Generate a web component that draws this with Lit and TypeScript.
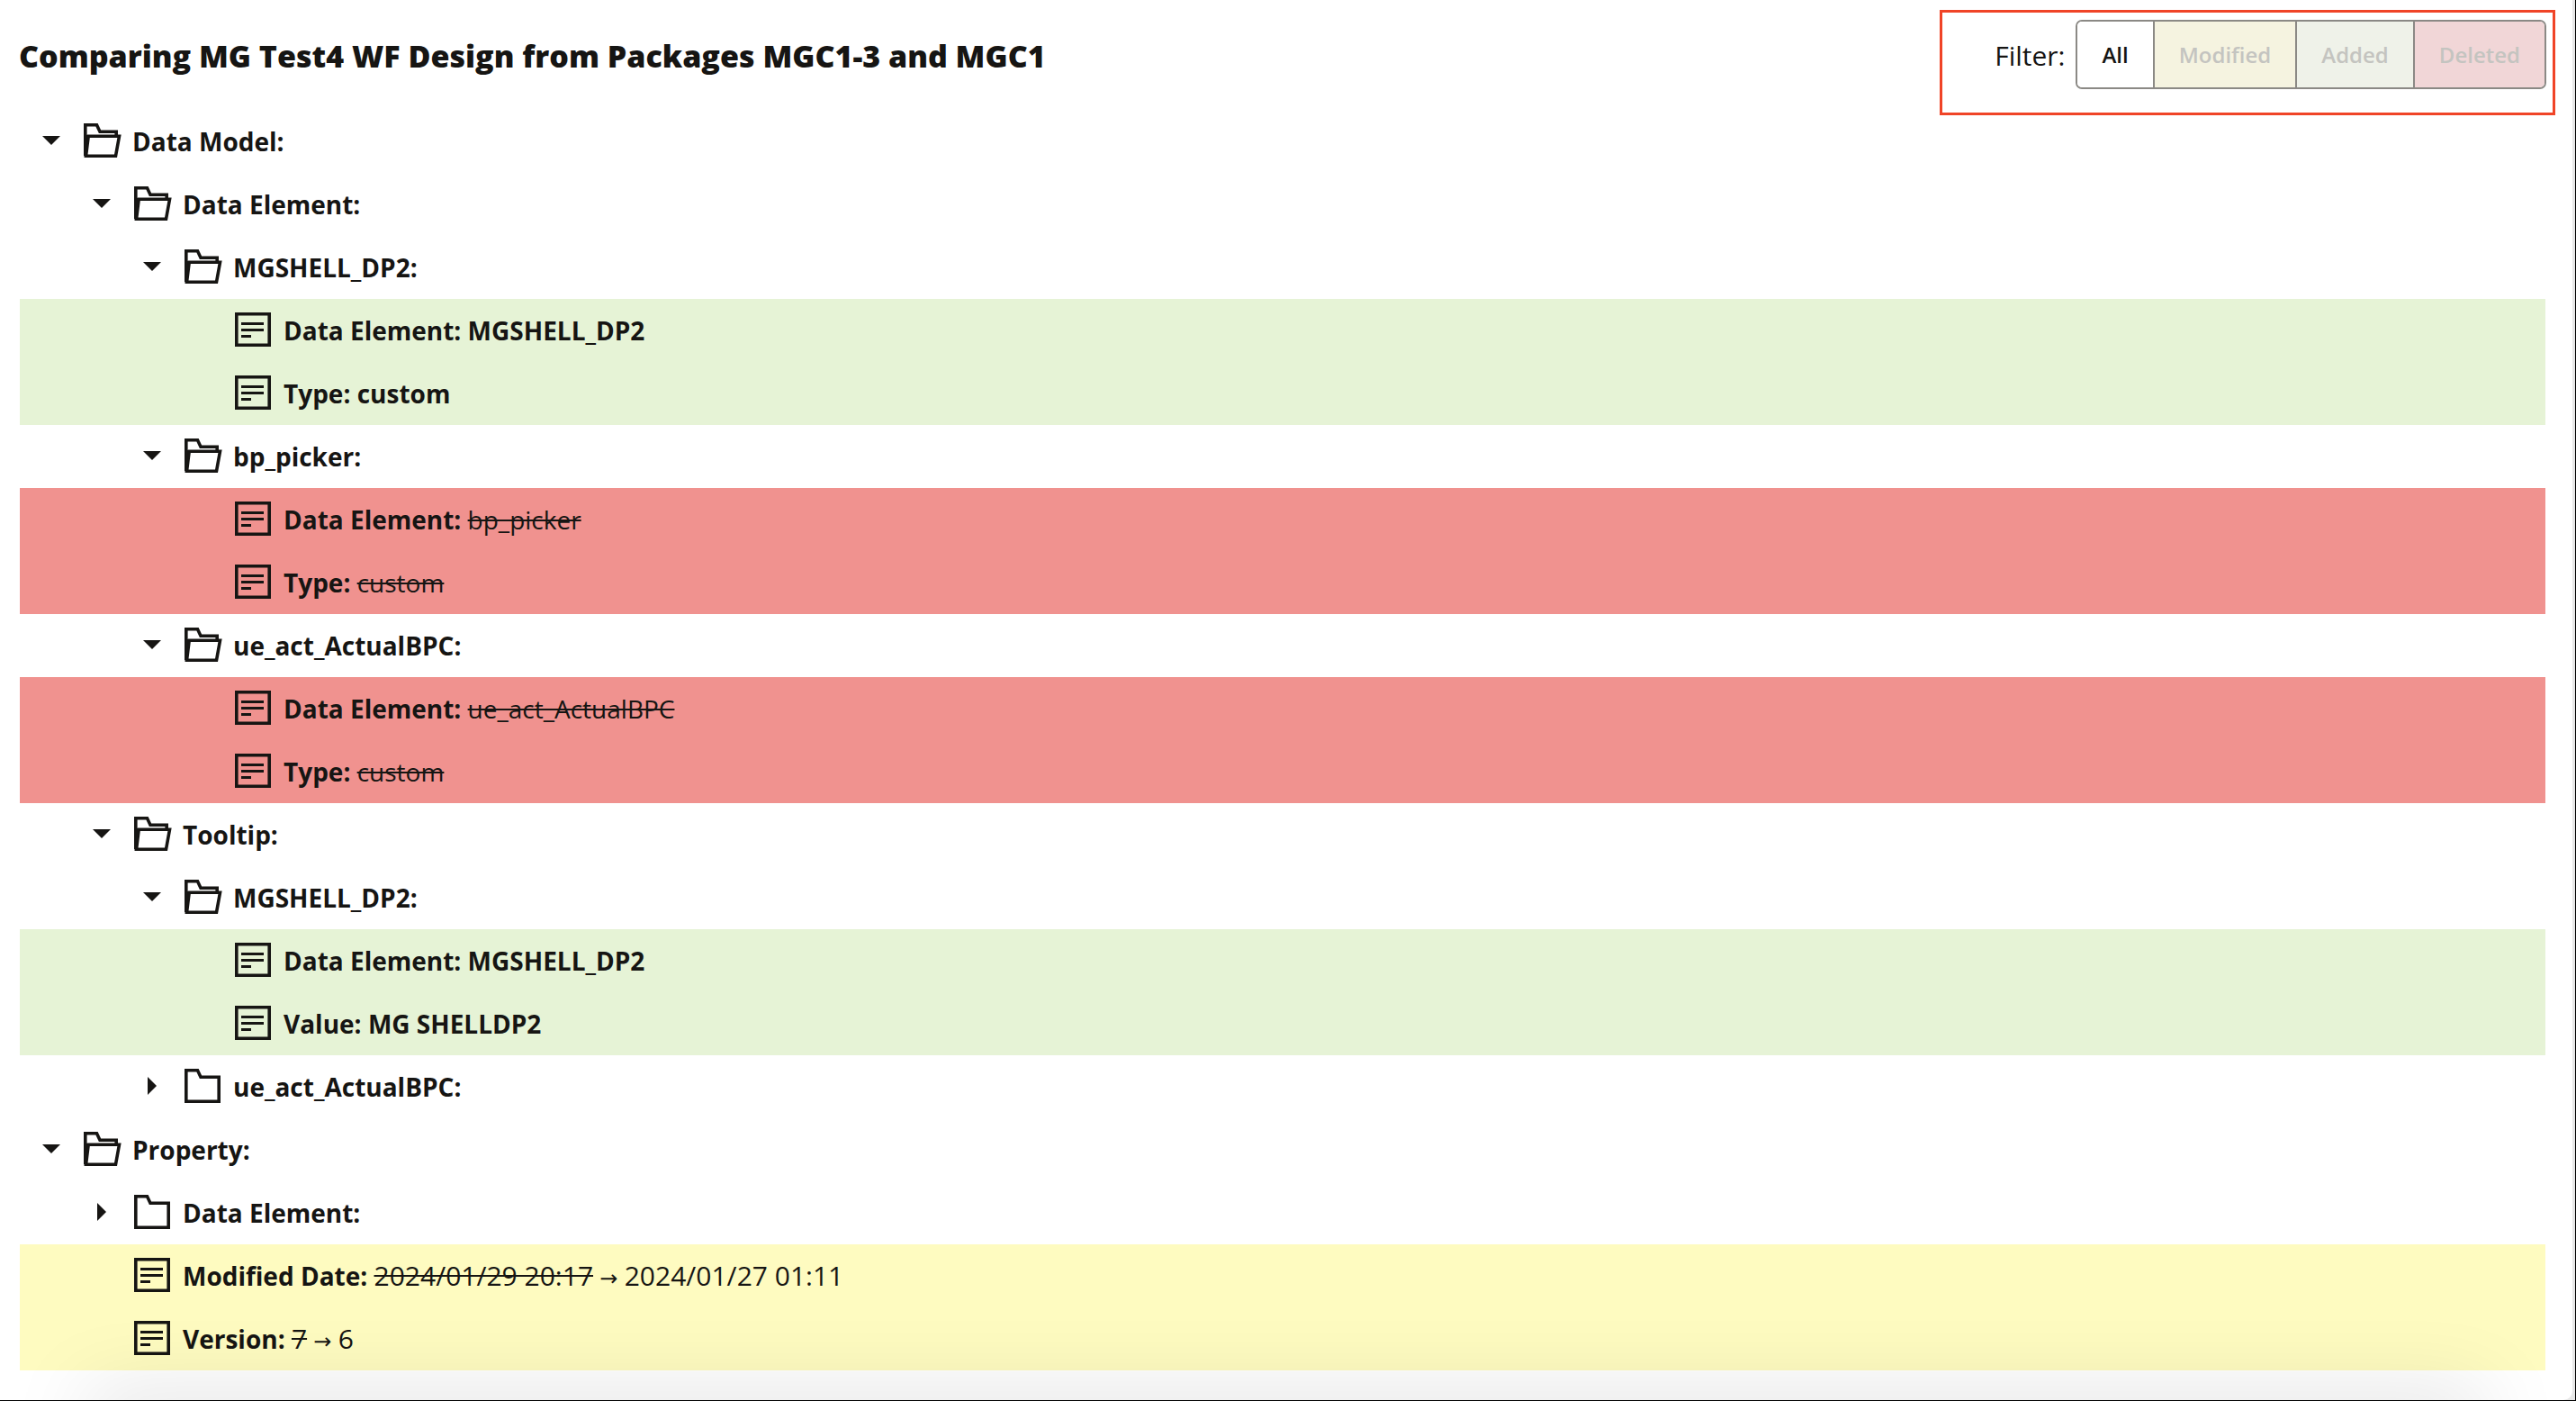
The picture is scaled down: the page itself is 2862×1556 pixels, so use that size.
import { LitElement, html, css, svg, nothing } from "lit";
import { customElement, state } from "lit/decorators.js";
import { classMap } from "lit/directives/class-map.js";

type Change = "added" | "deleted" | "modified";
type Filter = "all" | Change;

interface Row {
  label: string;
  level: number;
  kind: "open" | "closed" | "leaf";
  change?: Change;
  before?: string;
  after?: string;
}

const ROWS: Row[] = [
  { label: "Data Model:", level: 0, kind: "open" },
  { label: "Data Element:", level: 1, kind: "open" },
  { label: "MGSHELL_DP2:", level: 2, kind: "open" },
  { label: "Data Element:", level: 3, kind: "leaf", change: "added", after: "MGSHELL_DP2" },
  { label: "Type:", level: 3, kind: "leaf", change: "added", after: "custom" },
  { label: "bp_picker:", level: 2, kind: "open" },
  { label: "Data Element:", level: 3, kind: "leaf", change: "deleted", before: "bp_picker" },
  { label: "Type:", level: 3, kind: "leaf", change: "deleted", before: "custom" },
  { label: "ue_act_ActualBPC:", level: 2, kind: "open" },
  { label: "Data Element:", level: 3, kind: "leaf", change: "deleted", before: "ue_act_ActualBPC" },
  { label: "Type:", level: 3, kind: "leaf", change: "deleted", before: "custom" },
  { label: "Tooltip:", level: 1, kind: "open" },
  { label: "MGSHELL_DP2:", level: 2, kind: "open" },
  { label: "Data Element:", level: 3, kind: "leaf", change: "added", after: "MGSHELL_DP2" },
  { label: "Value:", level: 3, kind: "leaf", change: "added", after: "MG SHELLDP2" },
  { label: "ue_act_ActualBPC:", level: 2, kind: "closed" },
  { label: "Property:", level: 0, kind: "open" },
  { label: "Data Element:", level: 1, kind: "closed" },
  { label: "Modified Date:", level: 1, kind: "leaf", change: "modified", before: "2024/01/29 20:17", after: "2024/01/27 01:11" },
  { label: "Version:", level: 1, kind: "leaf", change: "modified", before: "7", after: "6" },
];

const FILTERS: { id: Filter; label: string }[] = [
  { id: "all", label: "All" },
  { id: "modified", label: "Modified" },
  { id: "added", label: "Added" },
  { id: "deleted", label: "Deleted" },
];

const ICONS = {
  open: svg`
    <path d="M1.8 36.2V1.8H14.5L18 9.2H36.2V14" />
    <path d="M5.200 14.200H39.500L35.500 36.200H2.500Z" />
    <path d="M1 13H6L3.500 37H1Z" fill="currentColor" stroke="none" />`,
  closed: svg`<path d="M1.800 1.800H14.500L18 9.200H38.200V36.200H1.800Z" />`,
  leaf: svg`
    <path d="M1.800 1.800H38.200V36.200H1.800Z" />
    <path d="M7 12.500H32M7 19.500H32M7 26.500H18" stroke-width="3" />`,
};

@customElement("app-root")
export class AppRoot extends LitElement {
  @state() private filter: Filter = "all";

  static styles = css`
    :host {
      display: block;
      font-family: "Open Sans", "Noto Sans", sans-serif;
      color: #161513;
    }
    .frame {
      box-sizing: border-box;
      display: flex;
      min-height: 100vh;
      padding-right: 3px;
      border-right: 1px solid #000;
      border-bottom: 1px solid #000;
      background: #e8e8e8;
    }
    .page {
      box-sizing: border-box;
      position: relative;
      flex: 1;
      min-width: 0;
      overflow: hidden;
      padding: 11px 30px 32px 21px;
      border-bottom-right-radius: 10px;
      background: #fff;
    }
    .header {
      display: flex;
      justify-content: space-between;
      align-items: flex-start;
      height: 111px;
    }
    .title {
      margin: 0;
      padding-top: 27px;
      font-size: 34px;
      line-height: 48px;
      font-weight: 800;
    }
    .filter {
      box-sizing: border-box;
      display: flex;
      align-items: flex-start;
      gap: 12px;
      height: 117px;
      margin-right: -11px;
      padding: 8px 7px 0 58px;
      border: 3px solid #f04427;
    }
    .filter-label {
      font-size: 30px;
      line-height: 80px;
    }
    .group {
      display: flex;
      height: 77px;
      box-sizing: border-box;
      border: 2px solid #8b8985;
      border-radius: 7px;
      overflow: hidden;
    }
    .option {
      padding: 0 27px;
      border: 0;
      border-left: 2px solid #8b8985;
      background: #fff;
      color: #c4c4c0;
      font: inherit;
      font-size: 24px;
      font-weight: 600;
      cursor: pointer;
    }
    .option.all { border-left: 0; }
    .option.modified { background: #f5f3e0; }
    .option.added { background: #eff2e9; }
    .option.deleted { background: #f1d6d7; }
    .option.active { color: #161513; }
    .tree {
      margin: 0 0 0 1px;
      padding: 0;
      list-style: none;
    }
    .row {
      display: flex;
      align-items: center;
      height: 70px;
      font-size: 28px;
      line-height: 70px;
      font-weight: 700;
    }
    .row.added { background: #e6f3d6; }
    .row.deleted { background: #f0928f; }
    .row.modified { background: #fefbc0; }
    .indent { flex: none; width: 56px; }
    .toggle {
      display: flex;
      justify-content: center;
      align-items: center;
      flex: none;
      width: 40px;
      height: 40px;
      margin: 0 16px 2px 15px;
      padding: 0;
      border: 0;
      background: none;
      color: inherit;
      cursor: pointer;
    }
    .spacer { flex: none; width: 71px; }
    .icon {
      flex: none;
      width: 42px;
      height: 38px;
      margin: 0 12px 2px 0;
      fill: none;
      stroke: currentColor;
      stroke-width: 3.6;
    }
    .arrow { width: 20px; height: 20px; fill: currentColor; }
    .before, .modified .after { font-weight: 400; }
    .before { text-decoration: line-through; text-decoration-thickness: 2px; }
    .modified .before, .modified .after { font-size: 30px; }
    .to {
      font-family: "DejaVu Sans", sans-serif;
      font-size: 24px;
      font-weight: 400;
      line-height: 1;
    }
    .text { white-space: pre; }
    .glow {
      position: absolute;
      left: 100px;
      right: 100px;
      top: 100%;
      height: 40px;
      box-shadow: 0 0 90px 4px rgba(0, 0, 0, 0.15);
      pointer-events: none;
    }
  `;

  private renderRow(row: Row) {
    return html`
      <li class=${classMap({ row: true, [row.change ?? "plain"]: true })}>
        ${Array.from({ length: row.level }, () => html`<span class="indent"></span>`)}
        ${row.kind === "leaf"
          ? html`<span class="spacer"></span>`
          : html`<button class="toggle" aria-label="Toggle ${row.label}" aria-expanded=${row.kind === "open"}>
              <svg class="arrow" viewBox="0 0 20 20">
                <path d=${row.kind === "open" ? "M0 5H20L10 15Z" : "M5 0L15 10L5 20Z"} />
              </svg>
            </button>`}
        <svg class="icon" viewBox="0 0 42 38" aria-hidden="true">${ICONS[row.kind]}</svg>
        <span class="text">${row.label}${row.before
            ? html` <span class="before">${row.before}</span>`
            : nothing}${row.after
            ? html`${row.before ? html` <span class="to">→</span> ` : " "}<span class="after">${row.after}</span>`
            : nothing}</span>
      </li>
    `;
  }

  render() {
    const rows = ROWS.filter((r) => this.filter === "all" || !r.change || r.change === this.filter);
    return html`
      <div class="frame">
        <main class="page">
          <header class="header">
            <h1 class="title">Comparing MG Test4 WF Design from Packages MGC1-3 and MGC1</h1>
            <div class="filter" role="group" aria-labelledby="filter-label">
              <span class="filter-label" id="filter-label">Filter:</span>
              <div class="group">
                ${FILTERS.map(
                  (f) => html`<button
                    class=${classMap({ option: true, [f.id]: true, active: this.filter === f.id })}
                    aria-pressed=${this.filter === f.id}
                    @click=${() => (this.filter = f.id)}
                  >${f.label}</button>`,
                )}
              </div>
            </div>
          </header>
          <ul class="tree">${rows.map((r) => this.renderRow(r))}</ul>
          <div class="glow"></div>
        </main>
      </div>
    `;
  }
}
